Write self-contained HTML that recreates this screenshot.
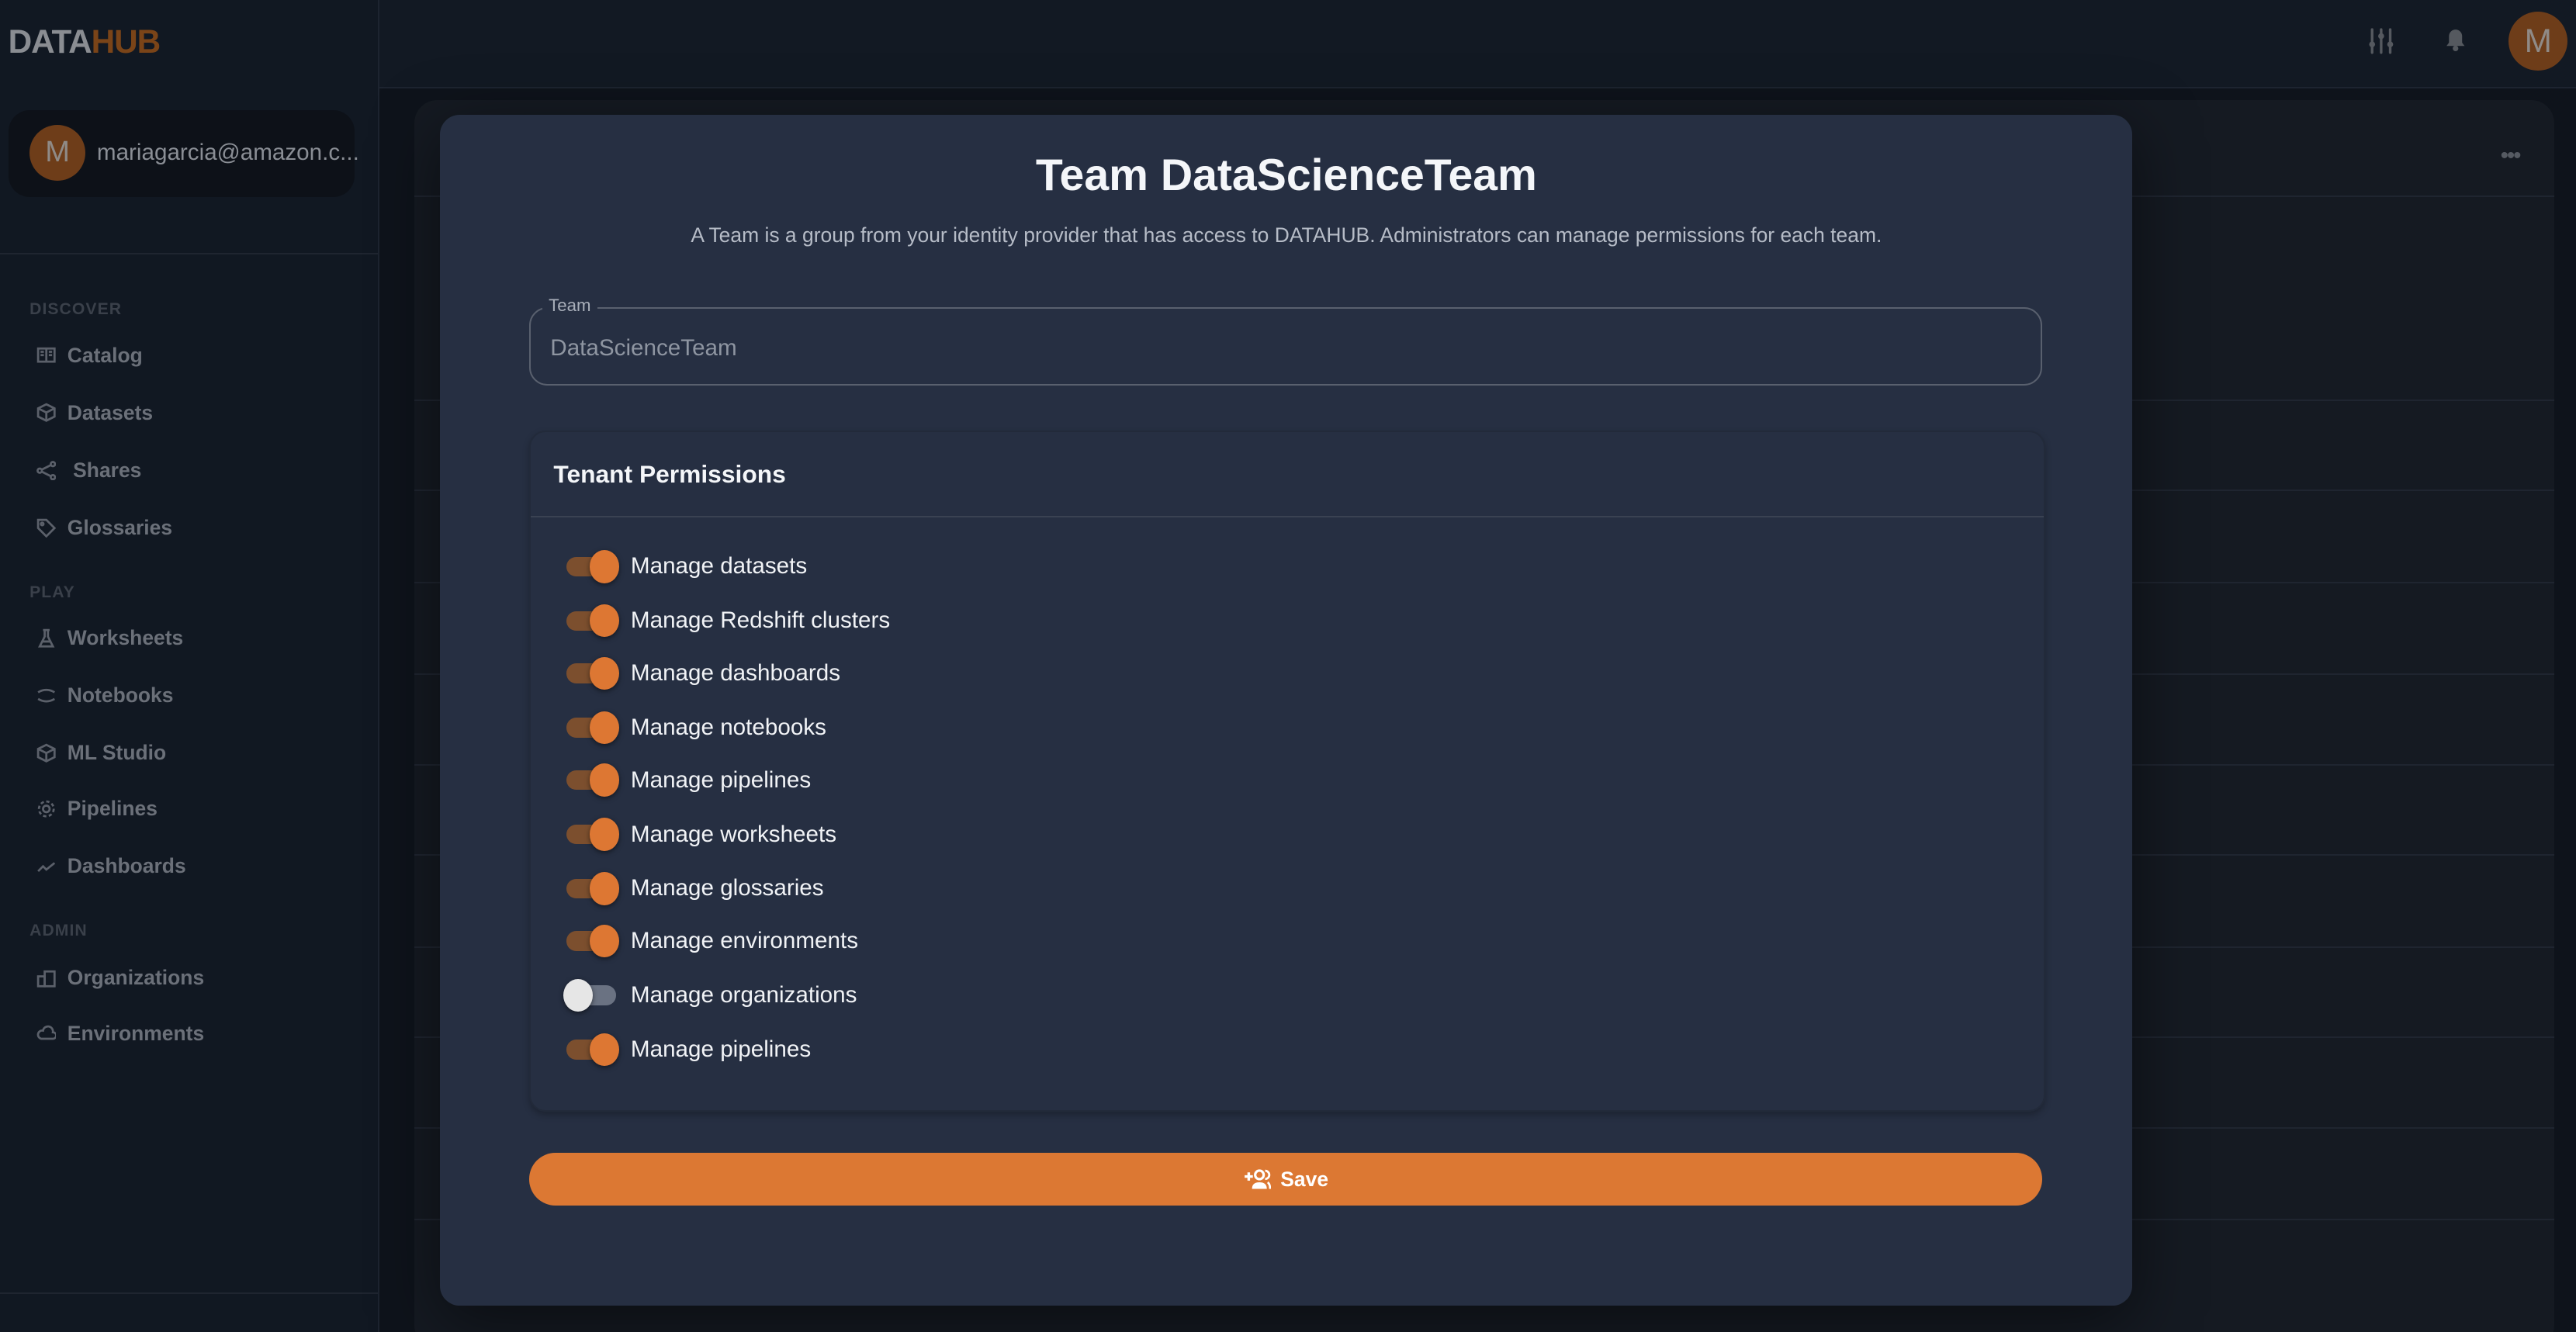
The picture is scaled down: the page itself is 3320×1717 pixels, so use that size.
<!DOCTYPE html>
<html><head><meta charset="utf-8"><style>
html,body{margin:0;padding:0;background:#0e131b;overflow:hidden}
body{width:1568px;height:811px;zoom:2.11735;position:relative;font-family:"Liberation Sans",sans-serif}
.abs{position:absolute}
.side{left:0;top:0;width:230px;height:811px;background:#111822;border-right:1px solid #1d2430}
.top{left:231px;top:0;right:0;height:53px;background:#121923;border-bottom:1px solid #1d2430}
.logo{left:5px;top:14px;font-size:20px;font-weight:bold;letter-spacing:-0.5px;color:#8a8d92}
.logo span{color:#7a4418}
.user{left:5px;top:67px;width:211px;height:53px;background:#0d1118;border-radius:13px}
.av{width:34px;height:34px;border-radius:50%;background:#6e3d19;color:#8f8a86;font-size:18px;text-align:center;line-height:34px}
.sec{left:18px;font-size:10px;font-weight:bold;color:#3a404a;letter-spacing:.5px}
.nav{left:22px;font-size:12.5px;font-weight:bold;color:#6b7079;display:flex;align-items:center;gap:7px}
.nav svg{width:12px;height:12px;stroke:#5b606a;fill:none;stroke-width:1.3}
.bgcard{left:252px;top:61px;width:1303px;height:760px;background:#151a22;border-radius:14px}
.row{left:252px;width:1303px;height:1px;background:#1f2530}
.modal{left:268px;top:70px;width:1030px;height:725px;background:#262f42;border-radius:12px;box-shadow:0 10px 40px rgba(0,0,0,.5)}
.tog{position:absolute;left:22px;width:30px;height:20px}
.tog .tr{position:absolute;left:0;top:4px;width:30px;height:12px;border-radius:6px;background:#7c4f2e}
.tog .kn{position:absolute;left:14px;top:0;width:18px;height:20px;border-radius:50%;background:#dd7733;box-shadow:0 1px 3px rgba(0,0,0,.5)}
.tog.off .tr{background:#6a7282}
.tog.off .kn{left:-2px;background:#e6e6e6}
.perm{position:absolute;left:61px;font-size:14px;color:#f1f3f6}
</style></head><body>
<div class="abs side"></div>
<div class="abs top"></div>
<div class="abs logo">DATA<span>HUB</span></div>
<div class="abs user"><div class="abs av" style="left:13px;top:9px">M</div><div class="abs" style="left:54px;top:18px;font-size:14px;color:#8a8e95">mariagarcia@amazon.c...</div></div>
<div class="abs" style="left:0;top:154px;width:230px;height:1px;background:#1f2530"></div>
<div class="abs" style="left:0;top:787px;width:230px;height:1px;background:#1f2530"></div>
<div class="abs sec" style="top:183px">DISCOVER</div>
<div class="abs nav" style="top:209px"><svg viewBox="0 0 12 12"><rect x="1" y="2" width="10" height="8"/><path d="M6 2v8M2.5 4h2M2.5 6h2M7.5 4h2M7.5 6h2"/></svg>Catalog</div>
<div class="abs nav" style="top:244px"><svg viewBox="0 0 12 12"><path d="M6 1l5 2.5v5L6 11 1 8.5v-5zM1 3.5L6 6l5-2.5M6 6v5"/></svg>Datasets</div>
<div class="abs nav" style="top:279px"><svg viewBox="0 0 12 12"><circle cx="2" cy="6" r="1.3"/><circle cx="10" cy="2" r="1.3"/><circle cx="10" cy="10" r="1.3"/><path d="M3 5.5l6-3M3 6.5l6 3"/></svg>&nbsp;Shares</div>
<div class="abs nav" style="top:314px"><svg viewBox="0 0 12 12"><path d="M1 1h5l5 5-5 5-5-5z"/><circle cx="3.5" cy="3.5" r=".8"/></svg>Glossaries</div>
<div class="abs sec" style="top:355px">PLAY</div>
<div class="abs nav" style="top:381px"><svg viewBox="0 0 12 12"><path d="M4 1h4M5 1v4l-3 6h8L7 5V1M3 8h6"/></svg>Worksheets</div>
<div class="abs nav" style="top:416px"><svg viewBox="0 0 12 12"><path d="M1 4q5-3 10 0M1 8q5 3 10 0"/></svg>Notebooks</div>
<div class="abs nav" style="top:451px"><svg viewBox="0 0 12 12"><path d="M6 1l5 2.5v5L6 11 1 8.5v-5zM1 3.5L6 6l5-2.5M6 6v5"/></svg>ML Studio</div>
<div class="abs nav" style="top:485px"><svg viewBox="0 0 12 12"><circle cx="6" cy="6" r="2"/><circle cx="6" cy="6" r="4.5" stroke-dasharray="2 1.5"/></svg>Pipelines</div>
<div class="abs nav" style="top:520px"><svg viewBox="0 0 12 12"><path d="M1 9l3-3 2 2 5-4"/></svg>Dashboards</div>
<div class="abs sec" style="top:561px">ADMIN</div>
<div class="abs nav" style="top:588px"><svg viewBox="0 0 12 12"><rect x="1" y="5" width="4" height="6"/><rect x="5" y="2" width="6" height="9"/></svg>Organizations</div>
<div class="abs nav" style="top:622px"><svg viewBox="0 0 12 12"><path d="M3 9h7a2 2 0 000-4 3 3 0 00-6-1 2.5 2.5 0 00-1 5z"/></svg>Environments</div>
<svg class="abs" style="left:1442px;top:17px" width="15" height="16" viewBox="0 0 15 16"><g stroke="#55595f" stroke-width="1.6" stroke-linecap="round"><path d="M2 1v14M7.5 1v14M13 1v14"/></g><circle cx="2" cy="10" r="1.8" fill="#55595f"/><circle cx="7.5" cy="5" r="1.8" fill="#55595f"/><circle cx="13" cy="10" r="1.8" fill="#55595f"/></svg>
<svg class="abs" style="left:1488px;top:17px" width="13" height="15" viewBox="0 0 13 15"><path d="M6.5 1a4 4 0 00-4 4v4L1 11h11l-1.5-2V5a4 4 0 00-4-4z" fill="#55595f"/><circle cx="6.5" cy="12.5" r="1.7" fill="#55595f"/></svg>
<div class="abs av" style="left:1527px;top:7px;width:36px;height:36px;line-height:36px;font-size:20px">M</div>
<div class="abs bgcard"></div>
<div class="abs" style="left:1522px;top:87px;color:#555a62;font-size:14px;letter-spacing:-1px">•••</div>
<div class="abs row" style="top:119px"></div>
<div class="abs row" style="top:243px"></div><div class="abs row" style="top:298px"></div><div class="abs row" style="top:354px"></div><div class="abs row" style="top:410px"></div><div class="abs row" style="top:465px"></div><div class="abs row" style="top:520px"></div><div class="abs row" style="top:576px"></div><div class="abs row" style="top:631px"></div><div class="abs row" style="top:686px"></div><div class="abs row" style="top:742px"></div>
<div class="abs modal">
 <div class="abs" style="left:0;width:1030px;top:21px;text-align:center;font-size:27px;font-weight:bold;color:#f4f6f9">Team DataScienceTeam</div>
 <div class="abs" style="left:0;width:1030px;top:66px;text-align:center;font-size:12.5px;color:#b6bcc7">A Team is a group from your identity provider that has access to DATAHUB. Administrators can manage permissions for each team.</div>
 <div class="abs" style="left:54px;top:117px;width:919px;height:46px;border:1px solid #59606e;border-radius:11px"></div>
 <div class="abs" style="left:62px;top:110px;padding:0 4px;background:#262f42;font-size:10.5px;color:#a9afba">Team</div>
 <div class="abs" style="left:67px;top:134px;font-size:14px;color:#8e95a1">DataScienceTeam</div>
 <div class="abs" style="left:54px;top:192px;width:921px;height:413px;border-radius:10px;border:1px solid #222a3a;box-shadow:0 2px 4px rgba(0,0,0,.25)">
  <div class="abs" style="left:14px;top:17px;font-size:15px;font-weight:bold;color:#f4f6f9">Tenant Permissions</div>
  <div class="abs" style="left:0;top:51px;width:921px;height:1px;background:#3a4252"></div>
  <div class="tog" style="top:72px"><div class="tr"></div><div class="kn"></div></div><div class="perm" style="top:74px">Manage datasets</div>
  <div class="tog" style="top:105px"><div class="tr"></div><div class="kn"></div></div><div class="perm" style="top:107px">Manage Redshift clusters</div>
  <div class="tog" style="top:137px"><div class="tr"></div><div class="kn"></div></div><div class="perm" style="top:139px">Manage dashboards</div>
  <div class="tog" style="top:170px"><div class="tr"></div><div class="kn"></div></div><div class="perm" style="top:172px">Manage notebooks</div>
  <div class="tog" style="top:202px"><div class="tr"></div><div class="kn"></div></div><div class="perm" style="top:204px">Manage pipelines</div>
  <div class="tog" style="top:235px"><div class="tr"></div><div class="kn"></div></div><div class="perm" style="top:237px">Manage worksheets</div>
  <div class="tog" style="top:268px"><div class="tr"></div><div class="kn"></div></div><div class="perm" style="top:270px">Manage glossaries</div>
  <div class="tog" style="top:300px"><div class="tr"></div><div class="kn"></div></div><div class="perm" style="top:302px">Manage environments</div>
  <div class="tog off" style="top:333px"><div class="tr"></div><div class="kn"></div></div><div class="perm" style="top:335px">Manage organizations</div>
  <div class="tog" style="top:366px"><div class="tr"></div><div class="kn"></div></div><div class="perm" style="top:368px">Manage pipelines</div>
 </div>
 <div class="abs" style="left:54px;top:632px;width:921px;height:32px;background:#dc7833;border-radius:16px;display:flex;align-items:center;justify-content:center;gap:6px;color:#fff;font-size:12.5px;font-weight:bold">
  <svg width="17" height="13" viewBox="0 0 17 13"><path d="M1 5h5M3.5 2.5v5" stroke="#fff" stroke-width="1.6"/><circle cx="10" cy="4" r="2.6" fill="none" stroke="#fff" stroke-width="1.5"/><path d="M5.5 12.5q0-4 4.5-4t4.5 4z" fill="#fff"/><path d="M13.5 1.5a2.5 2.5 0 010 5M15 8.5q1.5 1 1.5 4" fill="none" stroke="#fff" stroke-width="1.3"/></svg>Save</div>
</div>
</body></html>
